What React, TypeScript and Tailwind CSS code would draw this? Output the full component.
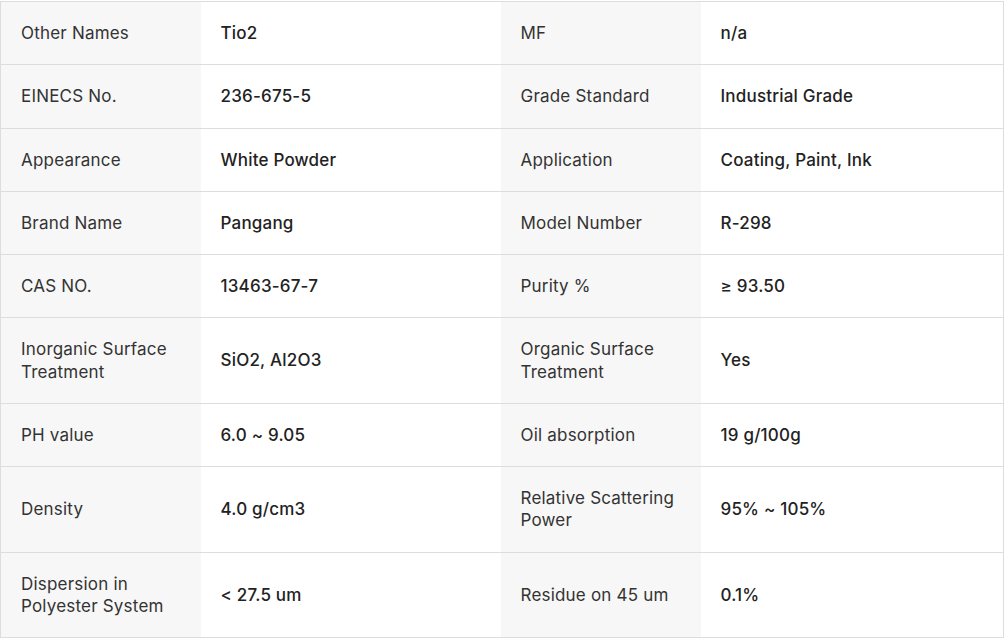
const rows: [string, string, string, string][] = [
  ['Other Names', 'Tio2', 'MF', 'n/a'],
  ['EINECS No.', '236-675-5', 'Grade Standard', 'Industrial Grade'],
  ['Appearance', 'White Powder', 'Application', 'Coating, Paint, Ink'],
  ['Brand Name', 'Pangang', 'Model Number', 'R-298'],
  ['CAS NO.', '13463-67-7', 'Purity %', '≥ 93.50'],
  ['Inorganic Surface Treatment', 'SiO2, Al2O3', 'Organic Surface Treatment', 'Yes'],
  ['PH value', '6.0 ~ 9.05', 'Oil absorption', '19 g/100g'],
  ['Density', '4.0 g/cm3', 'Relative Scattering Power', '95% ~ 105%'],
  ['Dispersion in Polyester System', '< 27.5 um', 'Residue on 45 um', '0.1%'],
]

export default function App() {
  return (
    <div className="bg-white w-[1005px] h-[642px] pt-px font-['Inter','Noto_Sans',sans-serif] text-[17px] leading-[22.25px] tracking-[0.2px]">
      <table className="w-[1003px] border-collapse border border-[#dddddd] table-fixed">
        <colgroup>
          <col className="w-[200px]" />
          <col className="w-[300px]" />
          <col className="w-[200px]" />
          <col className="w-[303px]" />
        </colgroup>
        <tbody>
          {rows.map(([l1, v1, l2, v2]) => (
            <tr key={l1} className="border-b border-[#dddddd]">
              <td className="bg-[#f7f7f7] px-5 py-5 text-[#333333] align-middle">{l1}</td>
              <td className="px-5 py-5 text-[#222222] font-medium align-middle">{v1}</td>
              <td className="bg-[#f7f7f7] px-5 py-5 text-[#333333] align-middle">{l2}</td>
              <td className="px-5 py-5 text-[#222222] font-medium align-middle">{v2}</td>
            </tr>
          ))}
        </tbody>
      </table>
    </div>
  )
}
